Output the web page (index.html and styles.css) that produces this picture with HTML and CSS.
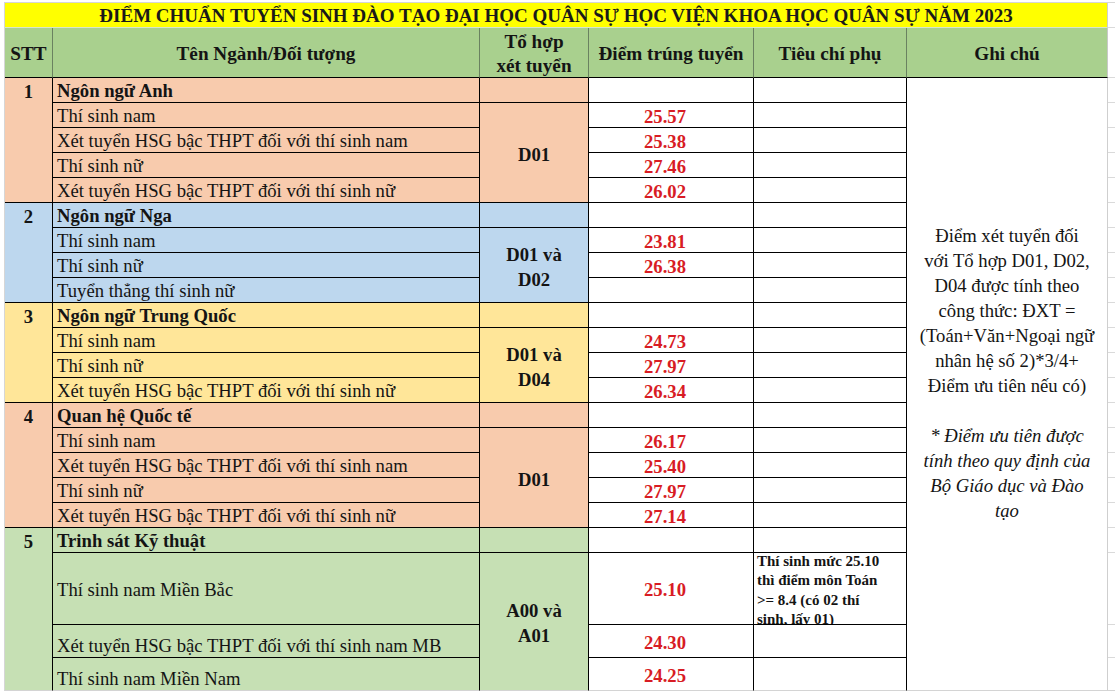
FILE: index.html
```html
<!DOCTYPE html>
<html lang="vi">
<head>
<meta charset="utf-8">
<title>Điểm chuẩn Học viện Khoa học Quân sự 2023</title>
<link rel="stylesheet" href="styles.css">
</head>
<body>
<div class="sheet">
  <!-- title -->
  <div class="cell title cols-6">ĐIỂM CHUẨN TUYỂN SINH ĐÀO TẠO ĐẠI HỌC QUÂN SỰ HỌC VIỆN KHOA HỌC QUÂN SỰ NĂM 2023</div>
  <div class="cell grid"></div>

  <!-- header -->
  <div class="cell head">STT</div>
  <div class="cell head">Tên Ngành/Đối tượng</div>
  <div class="cell head">Tổ hợp<br>xét tuyển</div>
  <div class="cell head">Điểm trúng tuyển</div>
  <div class="cell head">Tiêu chí phụ</div>
  <div class="cell head head-last">Ghi chú</div>
  <div class="cell grid"></div>

  <!-- 1 -->
  <div class="cell stt peach rows-5">1</div>
  <div class="cell name group peach">Ngôn ngữ Anh</div>
  <div class="cell combo peach"></div>
  <div class="cell score"></div>
  <div class="cell crit"></div>
  <div class="cell note rows-22">
    <p>Điểm xét tuyển đối<br>với Tổ hợp D01, D02,<br>D04 được tính theo<br>công thức: ĐXT =<br>(Toán+Văn+Ngoại ngữ<br>nhân hệ số 2)*3/4+<br>Điểm ưu tiên nếu có)</p>
    <p class="note-em">* Điểm ưu tiên được<br>tính theo quy định của<br>Bộ Giáo dục và Đào<br>tạo</p>
  </div>
  <div class="cell grid"></div>

  <div class="cell name peach">Thí sinh nam</div>
  <div class="cell combo peach rows-4">D01</div>
  <div class="cell score">25.57</div><div class="cell crit"></div><div class="cell grid"></div>
  <div class="cell name peach">Xét tuyển HSG bậc THPT đối với thí sinh nam</div>
  <div class="cell score">25.38</div><div class="cell crit"></div><div class="cell grid"></div>
  <div class="cell name peach">Thí sinh nữ</div>
  <div class="cell score">27.46</div><div class="cell crit"></div><div class="cell grid"></div>
  <div class="cell name peach">Xét tuyển HSG bậc THPT đối với thí sinh nữ</div>
  <div class="cell score">26.02</div><div class="cell crit"></div><div class="cell grid"></div>

  <!-- 2 -->
  <div class="cell stt blue rows-4">2</div>
  <div class="cell name group blue">Ngôn ngữ Nga</div>
  <div class="cell combo blue"></div>
  <div class="cell score"></div><div class="cell crit"></div><div class="cell grid"></div>
  <div class="cell name blue">Thí sinh nam</div>
  <div class="cell combo blue rows-3">D01 và<br>D02</div>
  <div class="cell score">23.81</div><div class="cell crit"></div><div class="cell grid"></div>
  <div class="cell name blue">Thí sinh nữ</div>
  <div class="cell score">26.38</div><div class="cell crit"></div><div class="cell grid"></div>
  <div class="cell name blue">Tuyển thẳng thí sinh nữ</div>
  <div class="cell score"></div><div class="cell crit"></div><div class="cell grid"></div>

  <!-- 3 -->
  <div class="cell stt sand rows-4">3</div>
  <div class="cell name group sand">Ngôn ngữ Trung Quốc</div>
  <div class="cell combo sand"></div>
  <div class="cell score"></div><div class="cell crit"></div><div class="cell grid"></div>
  <div class="cell name sand">Thí sinh nam</div>
  <div class="cell combo sand rows-3">D01 và<br>D04</div>
  <div class="cell score">24.73</div><div class="cell crit"></div><div class="cell grid"></div>
  <div class="cell name sand">Thí sinh nữ</div>
  <div class="cell score">27.97</div><div class="cell crit"></div><div class="cell grid"></div>
  <div class="cell name sand">Xét tuyển HSG bậc THPT đối với thí sinh nữ</div>
  <div class="cell score">26.34</div><div class="cell crit"></div><div class="cell grid"></div>

  <!-- 4 -->
  <div class="cell stt peach rows-5">4</div>
  <div class="cell name group peach">Quan hệ Quốc tế</div>
  <div class="cell combo peach"></div>
  <div class="cell score"></div><div class="cell crit"></div><div class="cell grid"></div>
  <div class="cell name peach">Thí sinh nam</div>
  <div class="cell combo peach rows-4">D01</div>
  <div class="cell score">26.17</div><div class="cell crit"></div><div class="cell grid"></div>
  <div class="cell name peach">Xét tuyển HSG bậc THPT đối với thí sinh nam</div>
  <div class="cell score">25.40</div><div class="cell crit"></div><div class="cell grid"></div>
  <div class="cell name peach">Thí sinh nữ</div>
  <div class="cell score">27.97</div><div class="cell crit"></div><div class="cell grid"></div>
  <div class="cell name peach">Xét tuyển HSG bậc THPT đối với thí sinh nữ</div>
  <div class="cell score">27.14</div><div class="cell crit"></div><div class="cell grid"></div>

  <!-- 5 -->
  <div class="cell stt green rows-4 last">5</div>
  <div class="cell name group green">Trinh sát Kỹ thuật</div>
  <div class="cell combo green"></div>
  <div class="cell score"></div><div class="cell crit"></div><div class="cell grid"></div>
  <div class="cell name green mid">Thí sinh nam Miền Bắc</div>
  <div class="cell combo green rows-3 last">A00 và<br>A01</div>
  <div class="cell score">25.10</div>
  <div class="cell crit crit-note">Thí sinh mức 25.10<br>thì điểm môn Toán<br>&gt;= 8.4 (có 02 thí<br>sinh, lấy 01)</div>
  <div class="cell grid"></div>
  <div class="cell name green">Xét tuyển HSG bậc THPT đối với thí sinh nam MB</div>
  <div class="cell score">24.30</div><div class="cell crit"></div><div class="cell grid"></div>
  <div class="cell name green last">Thí sinh nam Miền Nam</div>
  <div class="cell score last">24.25</div><div class="cell crit last"></div><div class="cell grid last"></div>
</div>
</body>
</html>
```
FILE: styles.css
```css
html, body {
  margin: 0;
  padding: 0;
  background: #ffffff;
  overflow: hidden;
}

body {
  font-family: "Liberation Serif", "Times New Roman", serif;
  font-size: 18.67px;
  color: #141414;
}

.sheet {
  display: grid;
  grid-template-columns: 48px 427px 109px 165px 153px 201px 12px;
  grid-template-rows: 25px 50px repeat(19, 25px) 72px 33px 33px;
  margin: 2px 0 0 4px;
  border-top: 1px solid #d6d6d6;
  border-left: 1px solid #d6d6d6;
  width: max-content;
}

.cell {
  box-sizing: border-box;
  border-right: 1px solid #000;
  border-bottom: 1px solid #000;
  padding-top: 3px;
  line-height: 22px;
  white-space: nowrap;
  overflow: hidden;
  display: flex;
  flex-direction: column;
  justify-content: center;
  min-width: 0;
  min-height: 0;
}

.cols-6 { grid-column: span 6; }
.rows-3 { grid-row: span 3; }
.rows-4 { grid-row: span 4; }
.rows-5 { grid-row: span 5; }
.rows-22 { grid-row: span 22; }

/* title */
.title {
  background: #ffff00;
  font-weight: bold;
  font-size: 19px;
  text-align: center;
  color: #1a1a1a;
  padding-top: 2px;
  line-height: 22px;
  border-right-color: #cfcfcf;
  border-bottom-color: #d9e6c8;
}

/* header */
.head {
  background: #a9d08e;
  font-weight: bold;
  font-size: 19.2px;
  text-align: center;
  line-height: 24px;
  border-right-color: #6a8260;
  border-bottom-color: #000;
}
.head-last { border-right-color: #c8c8c8; }

/* excel grid column */
.grid {
  border-right: none;
  border-bottom-color: #dadada;
  background: #fff;
}

/* group colours */
.peach { background: #f8cbad; }
.blue { background: #bdd7ee; }
.sand { background: #ffe699; }
.green { background: #c6e0b4; }

.stt {
  justify-content: flex-start;
  text-align: center;
  font-weight: bold;
}

.name {
  padding-left: 4px;
  justify-content: flex-end;
}
.name.mid { justify-content: center; }
.group { font-weight: bold; }

.combo {
  text-align: center;
  font-weight: bold;
  line-height: 25px;
}

.score {
  text-align: center;
  padding-right: 12px;
  font-weight: bold;
  color: #d81c24;
  background: #fff;
}

.crit { background: #fff; }
.crit-note {
  white-space: normal;
  font-size: 15px;
  font-weight: bold;
  line-height: 19.33px;
  padding-left: 3px;
  padding-top: 4px;
}

.note {
  background: #fff;
  text-align: center;
  white-space: normal;
  line-height: 25px;
  padding-bottom: 25px;
  border-right-color: #cfcfcf;
  border-bottom-color: #d4d4d4;
}
.note p { margin: 0; }
.note p + p { margin-top: 25px; }
.note-em { font-style: italic; }

.last { border-bottom-color: #d4d4d4; }
```
